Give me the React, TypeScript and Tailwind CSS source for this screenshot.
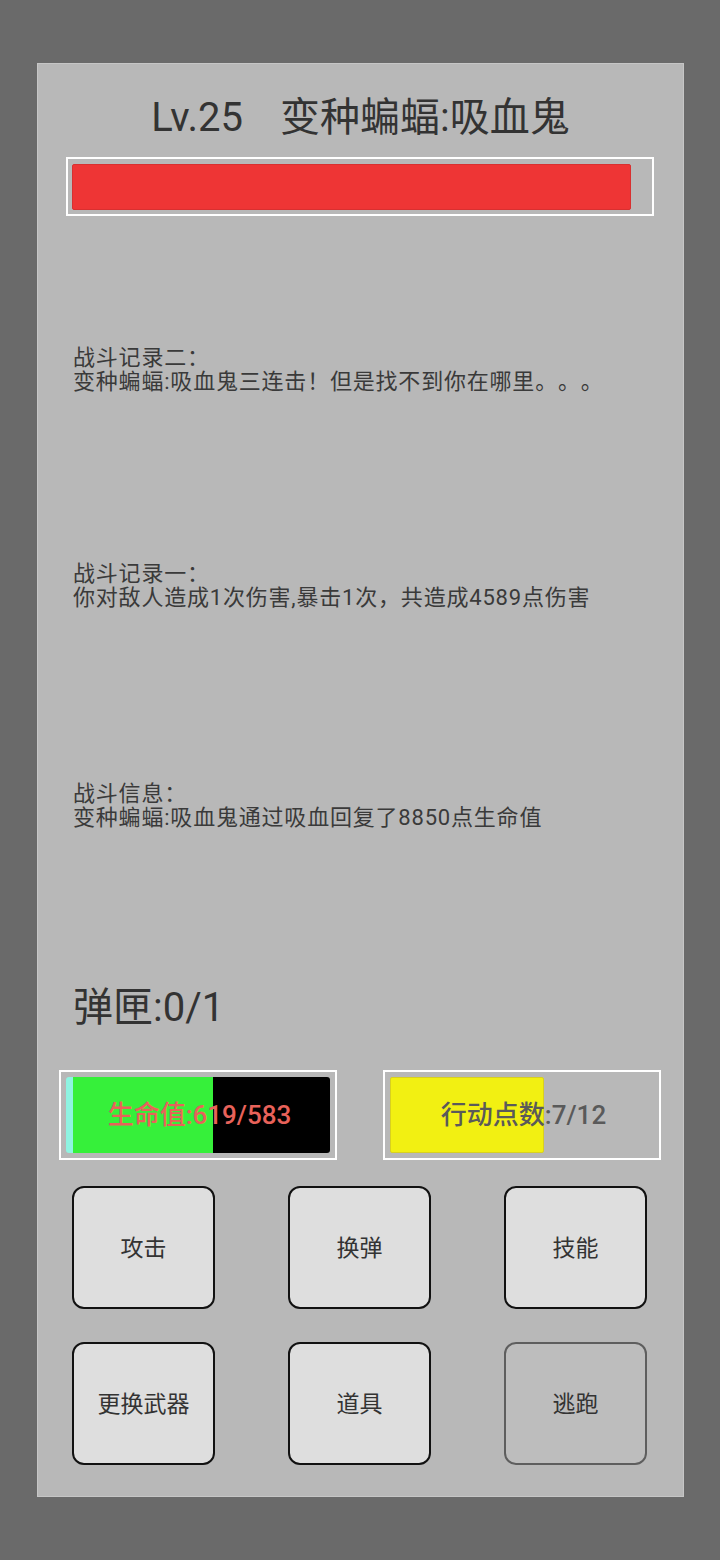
import React from "react";

const font = { fontFamily: '"Roboto", "Noto Sans CJK SC", sans-serif' };

function Log({ title, body, mt }: { title: string; body: string; mt: string }) {
  return (
    <div className={`${mt} ml-[35px] text-[22px] leading-[24px] tracking-[0.8px] text-[#3a3a3a] [text-spacing-trim:space-all]`}>
      <div>{title}</div>
      <div>{body}</div>
    </div>
  );
}

function Btn({ label, dim }: { label: string; dim?: boolean }) {
  return (
    <div
      className={`w-[143px] h-[123px] rounded-[12px] border-2 flex items-center justify-center pt-[3px] text-[23px] text-[#333] ${
        dim ? "bg-[#bdbdbd] border-[#5e5e5e]" : "bg-[#dedede] border-[#111]"
      }`}
    >
      {label}
    </div>
  );
}

export default function App() {
  return (
    <div className="w-[720px] h-[1560px] bg-[#6a6a6a] pt-[63px] pl-[37px]" style={font}>
      <div className="w-[647px] h-[1434px] bg-[#b8b8b8] border border-[#c6c6c6]">
        <div className="pt-[30px] flex justify-center gap-[37px] text-[40px] leading-[48px] text-[#333]">
          <span>Lv.25</span>
          <span>变种蝙蝠:吸血鬼</span>
        </div>
        <div className="mt-[15px] ml-[28px] w-[588px] h-[59px] border-2 border-white pl-[4px] pt-[5px]">
          <div className="w-[559px] h-[46px] bg-[#ee3535] rounded-[2px] border border-[#d83030]" />
        </div>
        <Log mt="mt-[130px]" title="战斗记录二：" body="变种蝙蝠:吸血鬼三连击！但是找不到你在哪里。。。" />
        <Log mt="mt-[168px]" title="战斗记录一：" body="你对敌人造成1次伤害,暴击1次，共造成4589点伤害" />
        <Log mt="mt-[172px]" title="战斗信息：" body="变种蝙蝠:吸血鬼通过吸血回复了8850点生命值" />
        <div className="mt-[154px] ml-[35px] text-[40px] leading-[48px] text-[#333]">弹匣:0/1</div>
        <div className="mt-[38px] ml-[21px] flex gap-[46px]">
          <div className="relative w-[278px] h-[90px] border-2 border-white p-[5px]">
            <div className="flex w-full h-full rounded-[3px] overflow-hidden">
              <div className="w-[7px] bg-[#8ff4e2]" />
              <div className="w-[140px] bg-[#36f03a]" />
              <div className="flex-1 bg-black" />
            </div>
            <div className="absolute inset-0 flex items-center justify-center pl-[3px] text-[26px] font-medium text-[#e8625a]">
              生命值:619/583
            </div>
          </div>
          <div className="relative w-[278px] h-[90px] border-2 border-white p-[5px]">
            <div className="w-[154px] h-full bg-[#f2f012] rounded-[2px] border border-[#d8d020]" />
            <div className="absolute inset-0 flex items-center justify-center pl-[3px] text-[26px] font-medium text-[#5a5a5a]">
              行动点数:7/12
            </div>
          </div>
        </div>
        <div className="mt-[26px] ml-[34px] grid grid-cols-[143px_143px_143px] gap-x-[73px] gap-y-[33px]">
          <Btn label="攻击" />
          <Btn label="换弹" />
          <Btn label="技能" />
          <Btn label="更换武器" />
          <Btn label="道具" />
          <Btn label="逃跑" dim />
        </div>
      </div>
    </div>
  );
}
